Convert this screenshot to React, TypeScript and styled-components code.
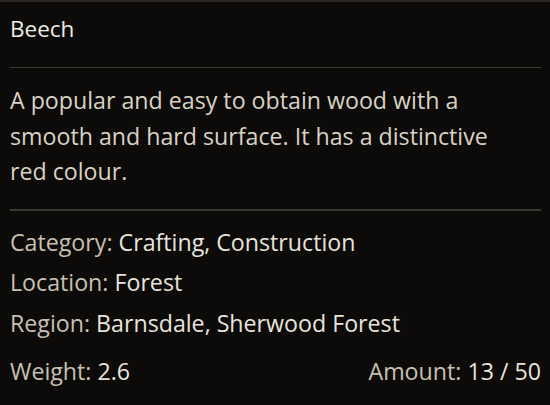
import styled, { createGlobalStyle } from "styled-components"

const Global = createGlobalStyle`
  html, body {
    margin: 0;
    padding: 0;
    background: #0c0b0a;
  }
`

const Panel = styled.div`
  width: 550px;
  height: 405px;
  box-sizing: border-box;
  background: #0c0b0a;
  border-top: 2px solid #2a2620;
  padding: 0 9px 0 10px;
  font-family: "Open Sans", "Noto Sans", sans-serif;
  color: #e4e0d8;
  overflow: hidden;`

const Title = styled.h1`
  margin: 0;
  padding-top: 12px;
  height: 65px;
  box-sizing: border-box;
  font-size: 22.5px;
  font-weight: 400;
  line-height: 30px;
  color: #eeeae4;`

const Rule = styled.div<{ $thick?: boolean }>`
  width: 100%;
  height: ${p => (p.$thick ? 2 : 1)}px;
  background: #3a3834;`

const Description = styled.p`
  margin: 0;
  max-width: 490px;
  padding: 15px 0 19px;
  font-size: 23.2px;
  line-height: 35.5px;
  color: #d9d2c4;`

const Stats = styled.div`
  display: flex;
  flex-direction: column;
  padding-top: 11px;`

const Row = styled.div`
  display: flex;
  justify-content: space-between;
  height: 40.5px;
  font-size: 23.2px;
  line-height: 40px;`

const Field = styled.span``

const Label = styled.span`
  color: #c8c0b0;`

const Value = styled.span`
  color: #e8e4dc;`

const FooterRow = styled(Row)`
  margin-top: 8px;`

function Stat({ label, value }: { label: string; value: string }) {
  return (
    <Field>
      <Label>{label}:</Label> <Value>{value}</Value>
    </Field>
  )
}

export default function App() {
  return (
    <>
      <Global />
      <Panel>
        <Title>Beech</Title>
        <Rule />
        <Description>
          A popular and easy to obtain wood with a smooth and hard surface. It has a distinctive red colour.
        </Description>
        <Rule $thick />
        <Stats>
          <Row><Stat label="Category" value="Crafting, Construction" /></Row>
          <Row><Stat label="Location" value="Forest" /></Row>
          <Row><Stat label="Region" value="Barnsdale, Sherwood Forest" /></Row>
          <FooterRow>
            <Stat label="Weight" value="2.6" />
            <Stat label="Amount" value="13 / 50" />
          </FooterRow>
        </Stats>
      </Panel>
    </>
  )
}
